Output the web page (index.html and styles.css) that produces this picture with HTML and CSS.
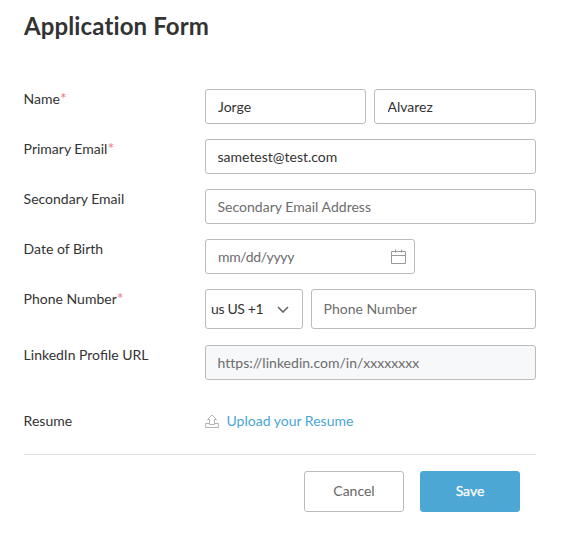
FILE: index.html
```html
<!DOCTYPE html>
<html lang="en">
<head>
<meta charset="utf-8">
<title>Application Form</title>
<link rel="stylesheet" href="styles.css">
</head>
<body>
<form class="form">
  <h1>Application Form</h1>
  <div class="row"><label>Name<i>*</i></label><div class="fields name"><input value="Jorge"><input value="Alvarez"></div></div>
  <div class="row"><label>Primary Email<i>*</i></label><div class="fields"><input value="sametest@test.com"></div></div>
  <div class="row"><label>Secondary Email</label><div class="fields"><input placeholder="Secondary Email Address"></div></div>
  <div class="row"><label>Date of Birth</label><div class="fields"><div class="date"><span>mm/dd/yyyy</span>
    <svg width="16" height="15" viewBox="0 0 16 15" fill="none" stroke="#999"><path d="M1.5 2.5h14v12h-14zM1.5 6.5h14M5.5 .5v3M11.5 .5v3"/></svg></div></div></div>
  <div class="row phone"><label>Phone Number<i>*</i></label><div class="fields"><div class="code"><span>us US +1</span>
    <svg width="12" height="8" viewBox="0 0 12 8" fill="none" stroke="#666" stroke-width="1.6"><path d="M1 2l5 5 5-5"/></svg></div><input placeholder="Phone Number"></div></div>
  <div class="row linkedin"><label>LinkedIn Profile URL</label><div class="fields"><input class="muted" placeholder="https://linkedin.com/in/xxxxxxxx"></div></div>
  <div class="row resume"><label>Resume</label><div class="fields upload">
    <svg width="14" height="14" viewBox="0 0 14 14" fill="none" stroke="#b5b5b5"><path d="M4.5 9.5h-4v4h13v-4h-4M4.5 10.5h5v-5h2L7 1 2.5 5.5h2z"/></svg><a>Upload your Resume</a></div></div>
  <div class="actions"><button type="button">Cancel</button><button type="button" class="save">Save</button></div>
</form>
</body>
</html>
```
FILE: styles.css
```css
* { box-sizing: border-box; }
body { margin: 0; background: #fff; color: #333; font: 14px/20px Lato, sans-serif; }
.form { width: 512px; margin-left: 24px; padding-top: 11px; }
h1 { margin: 0 0 48px; font-size: 24px; line-height: 30px; font-weight: 700; color: #333; font-variant-ligatures: none; letter-spacing: .12px; }
.row { display: flex; height: 35px; margin-bottom: 15px; }
label { width: 181px; flex: none; margin-left: -.4px; margin-right: .4px; }
i { color: #ea7889; font-style: normal; font-size: 16px; line-height: 1; }
.fields { display: flex; flex: 1; gap: 8px; min-width: 0; }
input { font: inherit; color: #333; width: 0; flex: 1; min-width: 0; height: 100%; margin: 0; padding: 0 11.5px; border: 1px solid #bbb; border-radius: 3px; background: #fff; }
.name input { padding-left: 12px; }
.name input:last-child { padding-left: 12.5px; }
.name input:first-child { flex: 0 0 161px; }
input::placeholder { color: #6c6c6c; opacity: 1; letter-spacing: .02px; }
.date, .code { display: flex; align-items: center; justify-content: space-between; border: 1px solid #bbb; border-radius: 3px; }
.date { width: 210px; padding: 0 8px 0 12px; color: #6c6c6c; }
.date span, .code span { letter-spacing: -.35px; }
.phone { height: 40px; margin-bottom: 16px; }
.phone input { padding-bottom: 2px; }
.code { width: 98px; padding: 0 13px 0 5px; }
.linkedin { margin-bottom: 31px; }
.muted { background: #f6f8fa; }
.resume { height: 43px; margin: 0; border-bottom: 1px solid #e2e2e2; box-sizing: content-box; }
.upload { align-items: flex-start; }
.upload svg { margin-top: 3px; }
.upload a { margin-left: -.5px; color: #4aa6d5; }
.actions { display: flex; justify-content: flex-end; gap: 16px; padding: 16px 16px 0 0; }
button { width: 100px; height: 41px; padding: 0 0 2px; border: 1px solid #bbb; border-radius: 3px; background: #fff; color: #666; font: inherit; }
.save { border-color: #4da7d5; background: #4da7d5; color: #fff; -webkit-text-stroke: .25px #fff; }
```
